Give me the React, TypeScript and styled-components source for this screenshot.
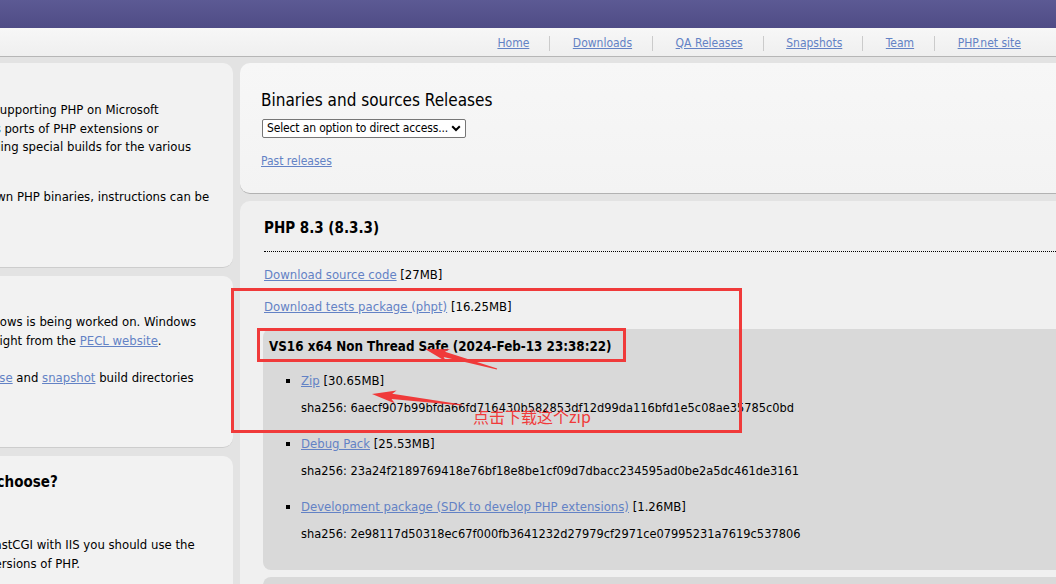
import React from "react";
import styled, { createGlobalStyle } from "styled-components";

const GlobalStyle = createGlobalStyle`
  html, body {
    margin: 0;
    padding: 0;
    overflow: hidden;
  }
`;

const RED = "#f03a3a";
const LINK = "#6382c5";
const FONT = `"DejaVu Sans Condensed", "DejaVu Sans", sans-serif`;

const Page = styled.div`
  position: relative;
  width: 1056px;
  height: 584px;
  overflow: hidden;
  background: #e3e3e3;
  font-family: ${FONT};
  font-size: 13px;
  color: #000;
`;

const TopBar = styled.div`
  height: 28px;
  background: linear-gradient(180deg, #5c5a94 0%, #4f4c86 100%);
`;

const NavBar = styled.nav`
  box-sizing: border-box;
  height: 29px;
  display: flex;
  justify-content: flex-end;
  align-items: center;
  padding: 3px 15px 0 0;
  background: linear-gradient(180deg, #f7f7f7 0%, #efefef 100%);
  border-bottom: 1px solid #b6b6b6;
`;

const NavItem = styled.div`
  font-size: 12px;
  line-height: 15px;
  padding: 0 20px 0 22.5px;

  & + & {
    border-left: 1px solid #cbcbcb;
  }
`;

const Link = styled.a`
  color: ${LINK};
  text-decoration: underline;
  cursor: pointer;
`;

const Main = styled.div`
  display: flex;
  gap: 7px;
  padding-top: 6px;
  margin-left: -169px;
`;

const LeftColumn = styled.div`
  flex: 0 0 402px;
  display: flex;
  flex-direction: column;
  gap: 8px;
`;

const RightColumn = styled.div`
  flex: 0 0 900px;
  display: flex;
  flex-direction: column;
  gap: 7px;
`;

const SidePanel = styled.section<{ $h: number; $pad?: number }>`
  box-sizing: border-box;
  height: ${(p) => p.$h}px;
  padding: ${(p) => p.$pad ?? 14}px 20px 14px;
  background: #f2f2f2;
  border-radius: 10px;
  border-bottom: 1px solid #cdcdcd;
`;

const SideTitle = styled.h2`
  margin: 0;
  font-size: 15px;
  line-height: 20px;
  font-weight: bold;
  white-space: nowrap;
`;

const SideSubtitle = styled.h3`
  margin: 14px 0 0;
  font-size: 13px;
  line-height: 18px;
  font-weight: bold;
`;

const SideText = styled.p<{ $top: number }>`
  margin: ${(p) => p.$top}px 0 0;
  line-height: 18.5px;
  white-space: nowrap;
`;

const ReleasesPanel = styled.section`
  box-sizing: border-box;
  height: 131px;
  padding: 26px 21px 0;
  background: linear-gradient(180deg, #f7f7f7 0%, #f3f3f3 100%);
  border-radius: 10px;
  border-bottom: 1px solid #b2b2b2;
`;

const ReleasesTitle = styled.h1`
  margin: 0;
  font-size: 17px;
  line-height: 22px;
  font-weight: normal;
`;

const SelectBox = styled.div`
  position: relative;
  box-sizing: border-box;
  width: 204px;
  height: 19px;
  margin: 8px 0 0 1px;
  background: #fff;
  border: 1px solid #767676;
  border-radius: 2px;
`;

const Select = styled.select`
  appearance: none;
  display: block;
  width: 100%;
  height: 100%;
  border: none;
  background: transparent;
  font-family: ${FONT};
  font-size: 12px;
  letter-spacing: -0.15px;
  line-height: 17px;
  padding: 0 14px 0 4px;
  color: #000;
  outline: none;
`;

const Chevron = styled.svg`
  position: absolute;
  right: 4px;
  top: 5px;
  pointer-events: none;
`;

const PastLink = styled(Link)`
  display: inline-block;
  margin-top: 15px;
  font-size: 12px;
  line-height: 16px;
`;

const VersionPanel = styled.section`
  box-sizing: border-box;
  height: 520px;
  padding: 17px 0 0 24px;
  background: #f0f0f0;
  border-radius: 10px;
`;

const VersionTitle = styled.h2`
  margin: 0;
  padding-bottom: 13px;
  font-size: 15px;
  line-height: 20px;
  font-weight: bold;
  border-bottom: 1px dotted #000;
`;

const FileLine = styled.p<{ $top: number }>`
  margin: ${(p) => p.$top}px 0 0;
  line-height: 18px;
`;

const BuildBox = styled.div<{ $top: number }>`
  margin-top: ${(p) => p.$top}px;
  padding: 9px 0 27px 6px;
  margin-left: -1px;
  background: #d9d9d9;
  border-radius: 8px 0 0 8px;
  min-height: 20px;
`;

const BuildTitle = styled.h3`
  margin: 0;
  font-size: 13.3px;
  line-height: 18px;
  font-weight: bold;
`;

const FileList = styled.ul`
  margin: 16px 0 0;
  padding-left: 32px;
  list-style: square;
`;

const FileItem = styled.li`
  line-height: 18px;

  & + & {
    margin-top: 18px;
  }
`;

const Sha = styled.p`
  margin: 9px 0 0;
  font-size: 12.7px;
  line-height: 18px;
`;

const Frame = styled.div<{ $x: number; $y: number; $w: number; $h: number }>`
  position: absolute;
  left: ${(p) => p.$x}px;
  top: ${(p) => p.$y}px;
  width: ${(p) => p.$w}px;
  height: ${(p) => p.$h}px;
  box-sizing: border-box;
  border: 3px solid ${RED};
  pointer-events: none;
`;

const ArrowLayer = styled.svg`
  position: absolute;
  left: 0;
  top: 0;
  pointer-events: none;
`;

const Note = styled.span`
  position: absolute;
  left: 473px;
  top: 406px;
  font-family: "Noto Sans CJK SC", "DejaVu Sans", sans-serif;
  font-size: 16px;
  line-height: 21px;
  color: ${RED};
  white-space: nowrap;
`;

// tapered arrow from its tip back to the tail
function arrow(tx: number, ty: number, ex: number, ey: number) {
  const dx = ex - tx;
  const dy = ey - ty;
  const len = Math.hypot(dx, dy);
  const ux = dx / len;
  const uy = dy / len;
  const nx = -uy;
  const ny = ux;
  const p = (a: number, b: number) =>
    `${(tx + ux * a + nx * b).toFixed(1)},${(ty + uy * a + ny * b).toFixed(1)}`;
  return [p(0, 0), p(24, 6.5), p(20, 2.6), p(len, 0.6), p(len, -0.6), p(20, -2.6), p(24, -6.5)].join(" ");
}

const navLinks = ["Home", "Downloads", "QA Releases", "Snapshots", "Team", "PHP.net site"];

const files = [
  {
    name: "Zip",
    size: "30.65MB",
    sha: "6aecf907b99bfda66fd716430b582853df12d99da116bfd1e5c08ae35785c0bd",
  },
  {
    name: "Debug Pack",
    size: "25.53MB",
    sha: "23a24f2189769418e76bf18e8be1cf09d7dbacc234595ad0be2a5dc461de3161",
  },
  {
    name: "Development package (SDK to develop PHP extensions)",
    size: "1.26MB",
    sha: "2e98117d50318ec67f000fb3641232d27979cf2971ce07995231a7619c537806",
  },
];

export default function App() {
  return (
    <Page>
      <GlobalStyle />
      <TopBar />
      <NavBar>
        {navLinks.map((l) => (
          <NavItem key={l}>
            <Link>{l}</Link>
          </NavItem>
        ))}
      </NavBar>

      <Main>
        <LeftColumn>
          <SidePanel $h={205}>
            <SideTitle>PHP For Windows</SideTitle>
            <SideText $top={4}>
              This site is dedicated to supporting PHP on Microsoft
              <br />
              Windows. It also supports ports of PHP extensions or
              <br />
              features as well as providing special builds for the various
              <br />
              Windows architectures.
            </SideText>
            <SideText $top={13}>
              If you like to build your own PHP binaries, instructions can be
              <br />
              found on the <Link>wiki</Link>.
            </SideText>
          </SidePanel>

          <SidePanel $h={172}>
            <SideTitle>PECL For Windows</SideTitle>
            <SideText $top={3}>
              PECL extensions for Windows is being worked on. Windows
              <br />
              DLL can be downloaded right from the <Link>PECL website</Link>.
            </SideText>
            <SideText $top={19}>
              The PECL extension <Link>release</Link> and <Link>snapshot</Link> build directories
              <br />
              are browsable directly.
            </SideText>
          </SidePanel>

          <SidePanel $h={300} $pad={16}>
            <SideTitle>Which version do I choose?</SideTitle>
            <SideSubtitle>IIS</SideSubtitle>
            <SideText $top={12}>
              If you are using PHP as FastCGI with IIS you should use the
              <br />
              Non-Thread Safe (NTS) versions of PHP.
            </SideText>
          </SidePanel>
        </LeftColumn>

        <RightColumn>
          <ReleasesPanel>
            <ReleasesTitle>Binaries and sources Releases</ReleasesTitle>
            <SelectBox>
              <Select defaultValue="">
                <option value="">Select an option to direct access...</option>
                <option value="8.3">PHP 8.3</option>
                <option value="8.2">PHP 8.2</option>
              </Select>
              <Chevron width="10" height="7" viewBox="0 0 10 7">
                <path d="M1.2 1.2 L5 5 L8.8 1.2" fill="none" stroke="#000" strokeWidth="2" />
              </Chevron>
            </SelectBox>
            <PastLink>Past releases</PastLink>
          </ReleasesPanel>

          <VersionPanel>
            <VersionTitle>PHP 8.3 (8.3.3)</VersionTitle>
            <FileLine $top={14}>
              <Link>Download source code</Link> [27MB]
            </FileLine>
            <FileLine $top={14}>
              <Link>Download tests package (phpt)</Link> [16.25MB]
            </FileLine>
            <BuildBox $top={13}>
              <BuildTitle>VS16 x64 Non Thread Safe (2024-Feb-13 23:38:22)</BuildTitle>
              <FileList>
                {files.map((f) => (
                  <FileItem key={f.name}>
                    <Link>{f.name}</Link> [{f.size}]
                    <Sha>sha256: {f.sha}</Sha>
                  </FileItem>
                ))}
              </FileList>
            </BuildBox>
            <BuildBox $top={7} />
          </VersionPanel>
        </RightColumn>
      </Main>

      <Frame $x={231} $y={288} $w={511} $h={145} />
      <Frame $x={257} $y={328} $w={369} $h={34} />
      <ArrowLayer width="1056" height="584" viewBox="0 0 1056 584">
        <polygon points={arrow(425, 349, 497, 369)} fill={RED} />
        <polygon points={arrow(372, 394, 462, 405)} fill={RED} />
      </ArrowLayer>
      <Note>点击下载这个zip</Note>
    </Page>
  );
}
